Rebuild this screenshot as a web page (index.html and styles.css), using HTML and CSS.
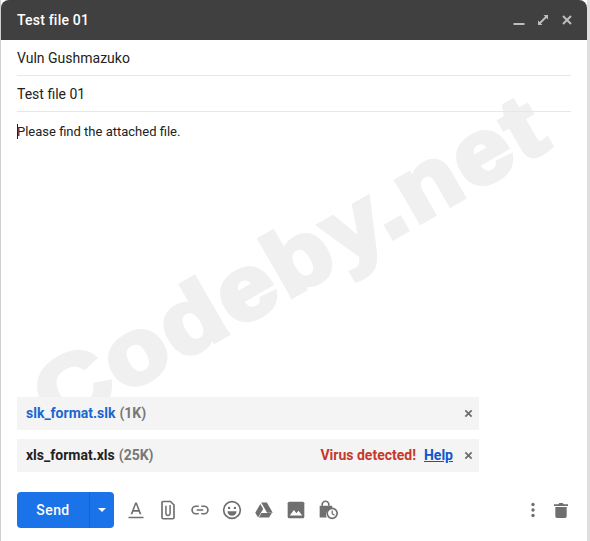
FILE: index.html
```html
<!DOCTYPE html>
<html lang="en">
<head>
<meta charset="utf-8">
<title>Test file 01</title>
<link rel="stylesheet" href="styles.css">
</head>
<body>
<div class="compose">
  <header class="title-bar">
    <span class="title">Test file 01</span>
    <div class="window-icons">
      <svg class="win-icon" viewBox="0 0 12 12"><rect x="0.500" y="9" width="11" height="2" fill="#bdbdbd"/></svg>
      <svg class="win-icon" viewBox="0 0 12 12"><path d="M6.500 1H11v4.500L9.400 3.900 3.900 9.400 5.500 11H1V6.500l1.600 1.600 5.500-5.500z" fill="#bdbdbd"/></svg>
      <svg class="win-icon" viewBox="0 0 12 12"><path d="M2 2l8 8M10 2l-8 8" stroke="#bdbdbd" stroke-width="2" fill="none"/></svg>
    </div>
  </header>
  <main class="content">
    <div class="watermark-clip"><div class="watermark">Codeby.net</div></div>
    <div class="field">Vuln Gushmazuko</div>
    <div class="field">Test file 01</div>
    <div class="body-text"><span class="caret"></span>Please find the attached file.</div>
    <div class="attachments">
      <div class="attachment">
        <span class="file-name link-name">slk_format.slk</span>
        <span class="file-size">(1K)</span>
        <span class="spacer"></span>
        <svg class="remove" viewBox="0 0 10 10"><path d="M1.500 1.500l7 7M8.500 1.500l-7 7" stroke="#6f6f6f" stroke-width="2" fill="none"/></svg>
      </div>
      <div class="attachment">
        <span class="file-name">xls_format.xls</span>
        <span class="file-size">(25K)</span>
        <span class="spacer"></span>
        <span class="virus">Virus detected!</span>
        <a class="help" href="#">Help</a>
        <svg class="remove" viewBox="0 0 10 10"><path d="M1.500 1.500l7 7M8.500 1.500l-7 7" stroke="#6f6f6f" stroke-width="2" fill="none"/></svg>
      </div>
    </div>
    <footer class="toolbar">
      <div class="send-group">
        <button class="send">Send</button>
        <button class="send-more"><svg viewBox="0 0 10 5" class="caret-down"><path d="M0 0h10L5 5z" fill="#fff"/></svg></button>
      </div>
      <div class="tools">
        <svg class="tool" viewBox="0 0 24 24"><path d="M3 20h18v2H3z M11 3h2l5.500 14h-2.200l-1.100-3H8.800l-1.100 3H5.500z M9.500 12h5L12 5.300z" fill="#6f6f6f" fill-rule="evenodd"/></svg>
        <svg class="tool" viewBox="0 0 24 24"><path d="M6 1.800h9l4.200 4.200v15a1.500 1.500 0 0 1-1.500 1.500H6.300A1.500 1.500 0 0 1 4.800 21V3A1.200 1.200 0 0 1 6 1.800z" fill="none" stroke="#6f6f6f" stroke-width="2"/><path d="M9.500 7v9a2.500 2.500 0 0 0 5 0V6" fill="none" stroke="#6f6f6f" stroke-width="1.800"/></svg>
        <svg class="tool" viewBox="0 0 24 24"><path d="M10.500 7.500H7a4.500 4.500 0 0 0 0 9h3.500M13.500 7.500H17a4.500 4.500 0 0 1 0 9h-3.500M8 12h8" fill="none" stroke="#6f6f6f" stroke-width="2"/></svg>
        <svg class="tool" viewBox="0 0 24 24"><circle cx="12" cy="12" r="10" fill="none" stroke="#6f6f6f" stroke-width="2"/><circle cx="8.500" cy="9.500" r="1.500" fill="#6f6f6f"/><circle cx="15.500" cy="9.500" r="1.500" fill="#6f6f6f"/><path d="M6.500 13.500h11a5.500 5.500 0 0 1-11 0z" fill="#6f6f6f"/></svg>
        <svg class="tool" viewBox="0 0 24 24"><path d="M8.600 3h6.800l7.100 12.200h-6.800z M7.600 4.800L11 10.700 4.900 21 1.500 15.200z M9 15.500h12.400L18 21H5.800z" fill="#6f6f6f"/></svg>
        <svg class="tool" viewBox="0 0 24 24"><path d="M4 2h16a2 2 0 0 1 2 2v16a2 2 0 0 1-2 2H4a2 2 0 0 1-2-2V4a2 2 0 0 1 2-2z" fill="#6f6f6f"/><path d="M4.500 18.500l5-6.500 3 3.800 2.500-3 4.500 5.700z" fill="#fff"/></svg>
        <svg class="tool" viewBox="0 0 24 24"><path d="M5 7V5.500a4 4 0 0 1 8 0V7" fill="none" stroke="#6f6f6f" stroke-width="2"/><path d="M2 7h15v3a7.500 7.500 0 0 0-6.500 11H2z" fill="#6f6f6f"/><circle cx="17" cy="16" r="6" fill="none" stroke="#6f6f6f" stroke-width="2"/><path d="M17 12.500V16.500l2.800 1.700" fill="none" stroke="#6f6f6f" stroke-width="1.500"/></svg>
      </div>
      <span class="spacer"></span>
      <svg class="more" viewBox="0 0 4 16"><circle cx="2" cy="2.500" r="1.700" fill="#6f6f6f"/><circle cx="2" cy="8" r="1.700" fill="#6f6f6f"/><circle cx="2" cy="13.500" r="1.700" fill="#6f6f6f"/></svg>
      <svg class="trash" viewBox="0 0 16 18"><path d="M0 2.500h5L6 1h4l1 1.500h5v2H0z M1.500 5.500h13V16a2 2 0 0 1-2 2h-9a2 2 0 0 1-2-2z" fill="#6f6f6f"/></svg>
    </footer>
  </main>
</div>
</body>
</html>
```

FILE: styles.css
```css
* { box-sizing: border-box; }

html, body {
  margin: 0;
  height: 541px;
  background: #fff;
  overflow: hidden;
}

body {
  font-family: Roboto, "Liberation Sans", sans-serif;
  color: #222;
}

.compose {
  height: 541px;
  border-left: 1px solid #cfcfcf;
  border-right: 3px solid #dedede;
  display: flex;
  flex-direction: column;
}

.title-bar {
  height: 40px;
  flex: none;
  background: #404040;
  border-radius: 8px 8px 0 0;
  display: flex;
  align-items: center;
  justify-content: space-between;
  padding: 0 14px 0 16px;
}

.title {
  color: #fff;
  font-size: 14px;
  font-weight: 500;
  letter-spacing: 0.2px;
}

.window-icons {
  display: flex;
  gap: 12px;
  align-items: center;
}

.win-icon { width: 12px; height: 12px; display: block; }

.content {
  position: relative;
  flex: 1;
  padding: 0 16px;
  display: flex;
  flex-direction: column;
  overflow: hidden;
}

.watermark-clip {
  position: absolute;
  left: 0;
  right: 0;
  top: 0;
  height: 357px;
  overflow: hidden;
}

.watermark {
  position: absolute;
  left: 56px;
  top: 311px;
  font-family: "Liberation Sans", sans-serif;
  font-size: 90px;
  font-weight: 700;
  line-height: 100px;
  letter-spacing: 3px;
  color: #f0f0f0;
  -webkit-text-stroke: 5px #f0f0f0;
  white-space: nowrap;
  transform: rotate(-30deg) scaleX(1.12);
  transform-origin: 0 81px;
}

.field {
  position: relative;
  height: 36px;
  flex: none;
  border-bottom: 1px solid #e8e8e8;
  font-size: 14px;
  line-height: 37px;
}

.body-text {
  position: relative;
  flex: 1;
  padding-top: 12px;
  font-size: 13px;
  line-height: 16px;
  color: #222;
}

.caret {
  display: inline-block;
  width: 1px;
  height: 15px;
  margin-right: -1px;
  background: #222;
  vertical-align: -3px;
}

.attachments {
  position: relative;
  flex: none;
  width: 462px;
  display: flex;
  flex-direction: column;
  gap: 9px;
  margin-bottom: 20px;
}

.attachment {
  height: 33px;
  background: #f4f4f4;
  display: flex;
  align-items: center;
  padding: 0 6px 2px 9px;
  font-size: 14px;
  font-weight: 700;
}

.file-name { color: #222; }
.link-name { color: #1a66d2; }
.file-size { color: #777; margin-left: 4px; }
.spacer { flex: 1; }
.virus { color: #c5392b; margin-right: 8px; }
.help { color: #1155cc; margin-right: 11px; }

.remove { width: 9px; height: 9px; display: block; margin-top: 2px; }

.toolbar {
  position: relative;
  flex: none;
  height: 36px;
  margin-bottom: 13px;
  display: flex;
  align-items: center;
}

.send-group {
  display: flex;
  height: 36px;
  width: 97px;
  background: #1a73e8;
  border-radius: 4px;
}

.send, .send-more {
  border: 0;
  background: none;
  padding: 0;
  color: #fff;
  font-family: inherit;
}

.send {
  width: 73px;
  font-size: 14px;
  font-weight: 500;
  letter-spacing: 0.4px;
  border-right: 1px solid #1765cc;
}

.send-more {
  flex: 1;
  display: flex;
  align-items: center;
  justify-content: center;
}

.caret-down { width: 8px; height: 4px; display: block; }

.tools {
  display: flex;
  gap: 12px;
  margin-left: 12px;
}

.tool { width: 20px; height: 20px; display: block; }

.more { width: 4px; height: 16px; display: block; margin-right: 19px; }
.trash { width: 14px; height: 16px; display: block; margin-right: 3px; }
```
